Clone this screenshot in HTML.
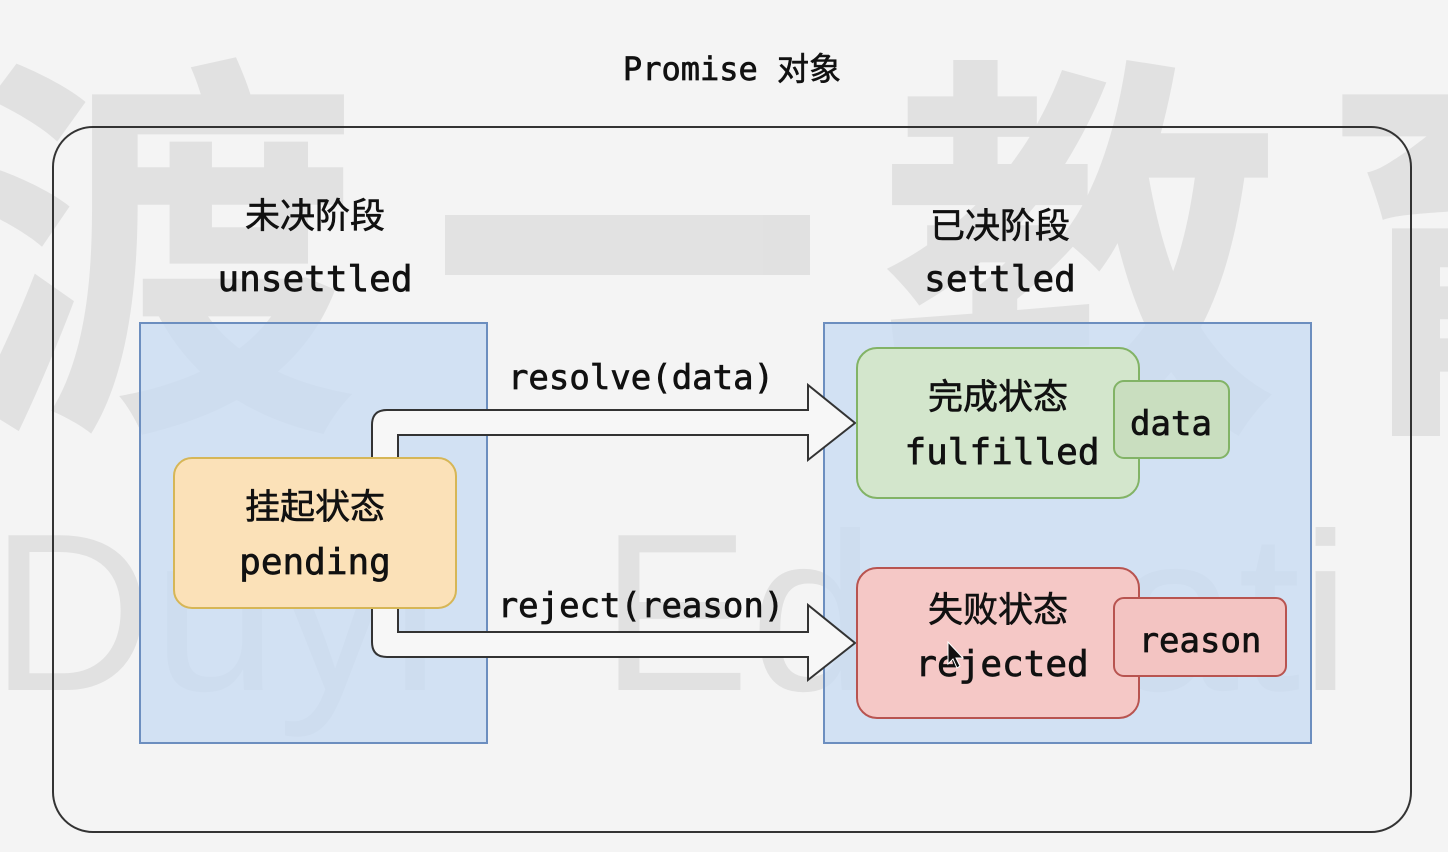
<!DOCTYPE html>
<html><head><meta charset="utf-8"><style>
html,body{margin:0;padding:0;background:#f4f4f4;width:1448px;height:852px;overflow:hidden}
svg{display:block}
.t{font-family:"DejaVu Sans Mono","Liberation Mono","Noto Sans CJK SC",monospace;fill:#111;stroke:#111;stroke-width:0.7}
.c{font-family:"Noto Sans CJK SC","WenQuanYi Zen Hei",sans-serif;fill:#111;stroke:#111;stroke-width:0.6}
</style></head><body>
<svg width="1448" height="852" viewBox="0 0 1448 852" xmlns="http://www.w3.org/2000/svg">
<rect width="1448" height="852" fill="#f4f4f4"/>
<g fill="#9a9a9a" opacity="0.2">
<text x="-40" y="400" font-family="Noto Sans CJK SC,sans-serif" font-weight="bold" font-size="400">渡</text>
<rect x="445" y="215" width="365" height="60"/>
<text x="880" y="400" font-family="Noto Sans CJK SC,sans-serif" font-weight="bold" font-size="400">教</text>
<text x="1320" y="400" font-family="Noto Sans CJK SC,sans-serif" font-weight="bold" font-size="400">育</text>
<text x="-10" y="690" font-family="Liberation Sans,sans-serif" font-size="225">Duyi</text>
<text x="600" y="690" font-family="Liberation Sans,sans-serif" font-size="225">Educati</text>
</g>
<rect x="53" y="127" width="1358" height="705" rx="40" fill="none" stroke="#333" stroke-width="2"/>
<text class="t" x="732" y="80" text-anchor="middle" font-size="32">Promise <tspan class="c" font-size="32">对象</tspan></text>
<text class="c" x="315" y="228" text-anchor="middle" font-size="35">未决阶段</text>
<text class="t" x="315" y="291" text-anchor="middle" font-size="36">unsettled</text>
<text class="c" x="1000" y="238" text-anchor="middle" font-size="35">已决阶段</text>
<text class="t" x="1000" y="291" text-anchor="middle" font-size="36">settled</text>
<rect x="140" y="323" width="347" height="420" fill="#c9dcf2" fill-opacity="0.8" stroke="#6c8ebf" stroke-width="2"/>
<rect x="824" y="323" width="487" height="420" fill="#c9dcf2" fill-opacity="0.8" stroke="#6c8ebf" stroke-width="2"/>
<path d="M372,458 L372,425 Q372,410 387,410 L808,410 L808,385 L855,423 L808,460 L808,435 L398,435 L398,458 Z" fill="#f7f7f7" stroke="#333" stroke-width="2"/>
<path d="M372,608 L372,642 Q372,657 387,657 L808,657 L808,680 L855,643 L808,605 L808,632 L398,632 L398,608 Z" fill="#f7f7f7" stroke="#333" stroke-width="2"/>
<text class="t" x="641" y="389" text-anchor="middle" font-size="34">resolve(data)</text>
<text class="t" x="641" y="617" text-anchor="middle" font-size="34">reject(reason)</text>
<rect x="174" y="458" width="282" height="150" rx="18" fill="#fbe1b8" stroke="#d6b656" stroke-width="2"/>
<text class="c" x="315" y="519" text-anchor="middle" font-size="35">挂起状态</text>
<text class="t" x="315" y="574" text-anchor="middle" font-size="36">pending</text>
<rect x="857" y="348" width="282" height="150" rx="20" fill="#d3e6cc" stroke="#82b366" stroke-width="2"/>
<rect x="1114" y="381" width="115" height="77" rx="10" fill="#c9debf" stroke="#82b366" stroke-width="2"/>
<text class="c" x="998" y="409" text-anchor="middle" font-size="35">完成状态</text>
<text class="t" x="1002" y="464" text-anchor="middle" font-size="36">fulfilled</text>
<text class="t" x="1171" y="435" text-anchor="middle" font-size="34">data</text>
<rect x="857" y="568" width="282" height="150" rx="20" fill="#f5c8c6" stroke="#b85450" stroke-width="2"/>
<rect x="1114" y="598" width="172" height="78" rx="10" fill="#f3c4c2" stroke="#b85450" stroke-width="2"/>
<text class="c" x="998" y="622" text-anchor="middle" font-size="35">失败状态</text>
<text class="t" x="1002" y="676" text-anchor="middle" font-size="36">rejected</text>
<text class="t" x="1200" y="652" text-anchor="middle" font-size="34">reason</text>
<path d="M948,642 L948,664 L953,659 L957,668 L960,666 L956,658 L963,658 Z" fill="#111" stroke="#fff" stroke-width="1"/>
</svg>
</body></html>
